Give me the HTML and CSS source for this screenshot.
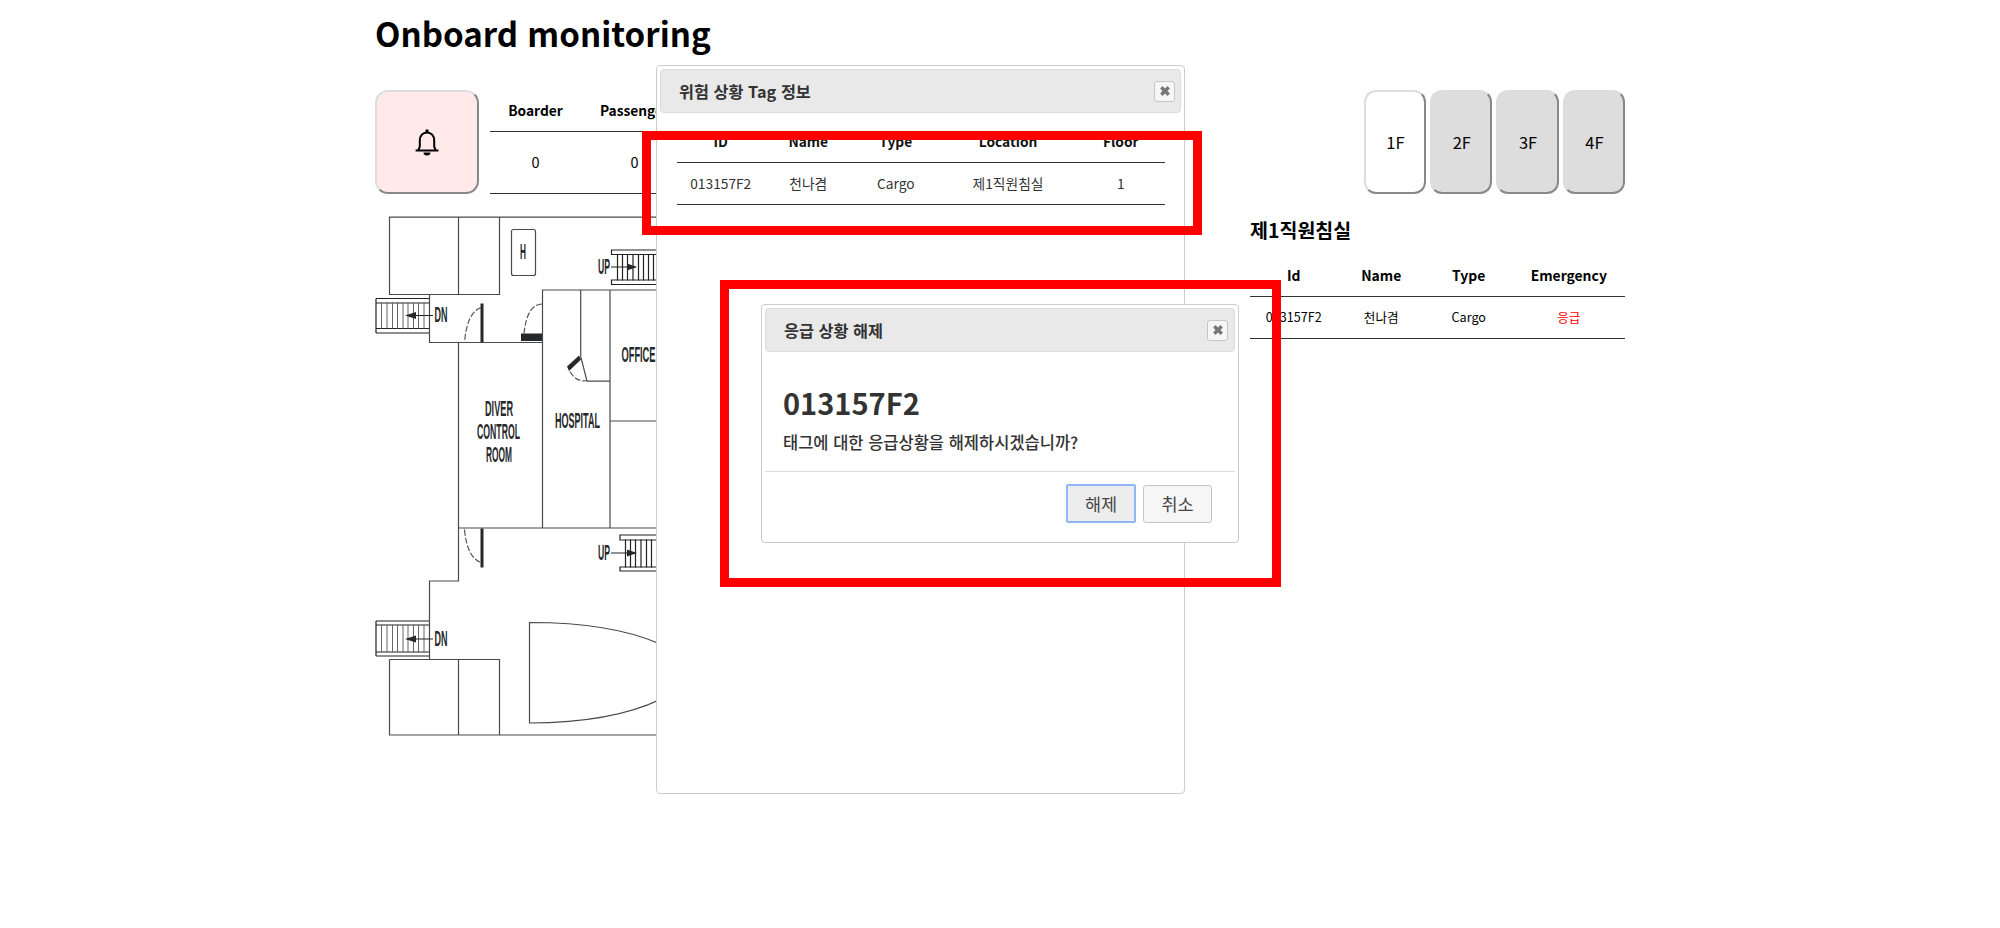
FILE: index.html
```html
<!DOCTYPE html>
<html lang="ko">
<head>
<meta charset="utf-8">
<title>Onboard monitoring</title>
<link rel="stylesheet" href="styles.css">
</head>
<body>
<main class="page">
  <h1 class="page-title">Onboard monitoring</h1>
  <div class="toolbar">
    <button class="bell" aria-label="Alarm">
      <svg width="24" height="28" viewBox="0 0 24 28"><path d="M.6 22.500H23.400M3.400 22.200L4.800 18.500V12.500C4.800 7.800 7.800 4.400 12 4.400S19.200 7.800 19.200 12.500V18.500L20.600 22.200" fill="none" stroke="#000" stroke-width="2"/><path d="M8.500 24.600H15.500A3.500 3 0 0 1 8.500 24.600Z"/><circle cx="12" cy="3" r="1.700"/></svg>
    </button>
    <table class="grid summary">
      <colgroup><col class="c-boarder"><col class="c-passenger"></colgroup>
      <thead><tr><th>Boarder</th><th>Passenger</th></tr></thead>
      <tbody><tr><td>0</td><td>0</td></tr></tbody>
    </table>
    <div class="floors">
      <button class="floor active">1F</button>
      <button class="floor">2F</button>
      <button class="floor">3F</button>
      <button class="floor">4F</button>
    </div>
  </div>
  <div class="content">
    <svg class="plan" width="285" height="540" viewBox="375 204.500 285 540">
      <g class="wall">
        <path d="M660 216.700H389.500V294H499.500V216.700M458.500 216.700V294M429.500 294V342H542.500M458.500 342V580.500H429.500V659M660 289.500H542.500V527.500M458.500 527.500H660M610 289.500V527.500M610 420.500H660M580.700 289.500V356L587 380.700H610"/>
        <path d="M389.500 659V734.500H660M389.500 659H499.500V734.500M458.500 659V734.500"/>
        <path d="M660 643.500Q612 622 529.500 622V722.500Q612 722 660 699"/>
        <rect x="511.500" y="229" width="24" height="46" rx="2"/>
      </g>
      <g class="stair">
        <path d="M376 298H429M376 302.500H429M376 328H429M376 332.500H429M376 298V332.500M376 620.500H429M376 624.500H429M376 651.500H429M376 655.500H429M376 620.500V655.500"/>
        <path d="M660 249.500H611.500V254H660M660 279.500H611.500V284H660M660 534.500H620V539.500H660M660 566.500H620V570.500H660"/>
        <path class="rung" d="M381.500 302V328M387 302V328M392.500 302V328M397.500 302V328M403 302V328M408 302V328M413.500 302V328M418.500 302V328M424 302V328M381.500 624V652M387 624V652M392.500 624V652M397.500 624V652M403 624V652M408 624V652M413.500 624V652M418.500 624V652M424 624V652"/>
        <path d="M617.500 254V280M622.500 254V280M627.500 254V280M633 254V280M638.500 254V280M643.500 254V280M648.500 254V280M653.500 254V280M625.500 539V567M630.500 539V567M635.500 539V567M641 539V567M646.500 539V567M651.500 539V567"/>
        <path d="M433 315H407M433 638.500H407M611 266.500H636M611 552.500H636"/>
      </g>
      <path class="solid" d="M405 315L416 311.500V318.500ZM405 638.500L416 635V642ZM637 266.500L627 263V270ZM637 552.500L627 549V556ZM480.500 303H483.500V342H480.500ZM480.500 528H483.500V567H480.500ZM521 333H542V340.500H521ZM567 366L579 355L581 359L569 370.500Z"/>
      <path class="swing" d="M481 307Q467 312 464.500 342M542 303.500Q527 304 524 333M464.500 529Q467 557 481 562M570 371Q576 382 587 380"/>
      <g class="plan-text">
        <text x="520" y="258" textLength="6" lengthAdjust="spacingAndGlyphs">H</text>
        <text x="598" y="273.500" textLength="12" lengthAdjust="spacingAndGlyphs">UP</text>
        <text x="598" y="559.500" textLength="12" lengthAdjust="spacingAndGlyphs">UP</text>
        <text x="434.500" y="321" textLength="13" lengthAdjust="spacingAndGlyphs">DN</text>
        <text x="434.500" y="645" textLength="13" lengthAdjust="spacingAndGlyphs">DN</text>
        <text x="621.500" y="361.500" textLength="34" lengthAdjust="spacingAndGlyphs">OFFICE</text>
        <text x="485" y="415.500" textLength="28" lengthAdjust="spacingAndGlyphs">DIVER</text>
        <text x="477" y="438.500" textLength="43" lengthAdjust="spacingAndGlyphs">CONTROL</text>
        <text x="486" y="461.500" textLength="26" lengthAdjust="spacingAndGlyphs">ROOM</text>
        <text x="555" y="427" textLength="45" lengthAdjust="spacingAndGlyphs">HOSPITAL</text>
      </g>
    </svg>
    <section class="room">
      <h3 class="room-title">제1직원침실</h3>
      <table class="grid people">
        <colgroup><col class="c-88"><col class="c-88"><col class="c-88"><col></colgroup>
        <thead><tr><th>Id</th><th>Name</th><th>Type</th><th>Emergency</th></tr></thead>
        <tbody><tr><td>013157F2</td><td>천나겸</td><td>Cargo</td><td class="danger">응급</td></tr></tbody>
      </table>
    </section>
  </div>
</main>

<section class="dialog dialog-info">
  <header class="titlebar"><span>위험 상황 Tag 정보</span>
    <button class="close" aria-label="Close"><svg width="10" height="10" viewBox="0 0 10 10"><path d="M1.300 1.300L8.700 8.700M8.700 1.300L1.300 8.700"/></svg></button>
  </header>
  <table class="grid tags">
    <colgroup><col class="c-88"><col class="c-88"><col class="c-88"><col class="c-location"><col></colgroup>
    <thead><tr><th>ID</th><th>Name</th><th>Type</th><th>Location</th><th>Floor</th></tr></thead>
    <tbody><tr><td>013157F2</td><td>천나겸</td><td>Cargo</td><td>제1직원침실</td><td>1</td></tr></tbody>
  </table>
</section>

<section class="dialog dialog-confirm">
  <header class="titlebar"><span>응급 상황 해제</span>
    <button class="close" aria-label="Close"><svg width="10" height="10" viewBox="0 0 10 10"><path d="M1.300 1.300L8.700 8.700M8.700 1.300L1.300 8.700"/></svg></button>
  </header>
  <div class="message">
    <h2 class="tag-id">013157F2</h2>
    <p class="question">태그에 대한 응급상황을 해제하시겠습니까?</p>
  </div>
  <footer class="actions">
    <button class="action focused">해제</button>
    <button class="action">취소</button>
  </footer>
</section>

<div class="marker marker-info"></div>
<div class="marker marker-confirm"></div>
</body>
</html>
```
FILE: styles.css
```css
* { box-sizing: border-box; }
body {
  margin: 0;
  height: 928px;
  overflow: hidden;
  background: #fff;
  color: #000;
  font-family: "Noto Sans CJK KR", "Noto Sans", sans-serif;
  font-size: 16.5px;
}
button { font-family: inherit; padding: 0; color: inherit; }
svg { display: block; }
.page { width: 1250px; margin: 0 auto; }
.page-title { margin: 0; padding-top: 8px; height: 90px; font-size: 33.100px; line-height: 51px; font-weight: 700; }
.toolbar { display: flex; height: 104px; }
.bell {
  width: 104px;
  height: 104px;
  border: 2px solid;
  border-color: #ddd #888 #888 #ddd;
  border-radius: 13px;
  background: #ffe9e9;
  display: flex;
  align-items: center;
  justify-content: center;
}
.grid { border-collapse: collapse; table-layout: fixed; text-align: center; line-height: 20px; }
.grid th, .grid td { padding: 0; }
.grid th { font-weight: 700; }
.grid tr { border-bottom: 1px solid #333; }
.summary { width: 198px; height: 104px; margin-left: 11px; font-size: 14.500px; }
.summary th { height: 41px; font-size: 13.750px; }
.c-boarder { width: 91px; }
.c-passenger { width: 107px; }
.c-88 { width: 87.5px; }
.c-location { width: 137px; }
.floors { display: flex; gap: 4px; margin-left: auto; }
.floor {
  width: 62.3px;
  height: 104px;
  border: 2px solid;
  border-color: #ddd #888 #888 #ddd;
  border-radius: 12px;
  background: #ddd;
  font-size: 16.5px;
  padding-left: 1px;
}
.floor.active { background: #fff; }
.content { display: flex; justify-content: space-between; padding-top: 11px; }
.room { width: 375px; }
.room-title { margin: 0; padding-top: 11px; font-size: 19.500px; line-height: 28px; font-weight: 700; }
.people { width: 375px; margin-top: 10px; font-size: 12.600px; }
.people th { font-size: 13.900px; }
.people th, .tags th { height: 42px; }
.people td, .tags td { height: 42px; }
.danger { color: #f00; }

.wall { fill: none; stroke: #4a4a4a; stroke-width: 1.2; }
.stair { fill: none; stroke: #222; stroke-width: 1.2; }
.rung { stroke: #666; stroke-width: 1; }
.solid { fill: #26282b; }
.swing { fill: none; stroke: #555; stroke-width: 1.2; stroke-dasharray: 6 2; }
.plan-text text { font: 700 21.500px "Liberation Sans", Arial, sans-serif; fill: #26282b; }

.dialog {
  position: absolute;
  padding: 3px;
  border: 1.25px solid #ccc;
  border-radius: 4px;
  background: #fff;
  color: #333;
}
.dialog-info { left: 656px; top: 65px; width: 529px; height: 729px; }
.dialog-confirm { left: 761px; top: 304px; width: 478px; height: 239px; }
.titlebar {
  display: flex;
  align-items: center;
  justify-content: space-between;
  height: 44px;
  padding: 0 5px 0 18px;
  border: 1px solid #ddd;
  border-radius: 4px;
  background: #e9e9e9;
  font-size: 16.300px;
  font-weight: 700;
}
.dialog-confirm .titlebar { padding-right: 6px; }
.close {
  display: flex;
  align-items: center;
  justify-content: center;
  width: 21px;
  height: 21px;
  border: 1px solid #c5c5c5;
  border-radius: 3px;
  background: #f6f6f6;
}
.close path { stroke: #777; stroke-width: 3.400; fill: none; }
.tags { width: 488px; margin: 7px 0 0 17px; font-size: 13.750px; }
.tags th { color: #111; }
.message { height: 120px; padding: 30px 18px 0; border-bottom: 1px solid #ddd; }
.tag-id { margin: 0; font-size: 29px; line-height: 40px; font-weight: 700; }
.question { margin: 6px 0 0; font-size: 16.500px; line-height: 28px; font-weight: 500; }
.actions { display: flex; justify-content: flex-end; align-items: center; gap: 7px; padding: 12px 23px 0 0; }
.action {
  width: 69px;
  height: 38px;
  border: 1px solid #c5c5c5;
  border-radius: 3px;
  background: #f6f6f6;
  color: #454545;
  font-size: 17.500px;
  font-weight: 400;
}
.action.focused { width: 70px; height: 39px; border: 2px solid #8fb7f5; border-radius: 2px; background: #ededed; }

.marker { position: absolute; border: 9px solid #f00; }
.marker-info { left: 642px; top: 131px; width: 560px; height: 104px; }
.marker-confirm { left: 720px; top: 280px; width: 561px; height: 307px; }
```
